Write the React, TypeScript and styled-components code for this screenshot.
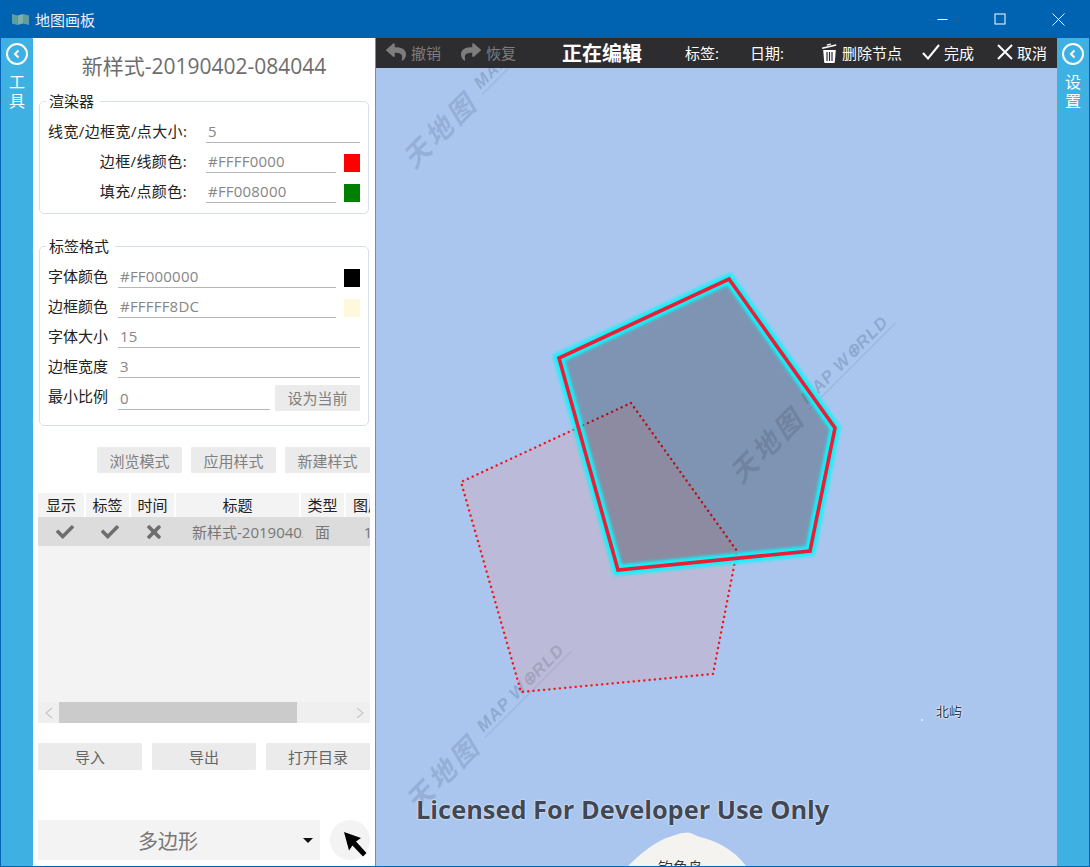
import React from 'react';
import styled, { createGlobalStyle } from 'styled-components';
import { FaCheck, FaReply, FaShare, FaTimes } from 'react-icons/fa';

const GlobalStyle = createGlobalStyle`
  html, body { margin: 0; padding: 0; background: #fff; }
  * { box-sizing: border-box; }
  body { font-family: "Open Sans", "Noto Sans CJK SC", sans-serif; font-size: 15px; color: #222; }
`;

const Window = styled.div`
  width: 1090px;
  height: 867px;
  display: flex;
  flex-direction: column;
  border: 1px solid #0063b1;
  border-top: 0;
  overflow: hidden;
`;

const TitleBar = styled.div`
  height: 38px;
  flex: none;
  display: flex;
  align-items: center;
  margin: 0 -1px;
  padding: 0 3px 0 12px;
  background: #0063b1;
  color: #e8f0f8;
  font-size: 15px;
`;

const TitleText = styled.span`
  margin-left: 6px;
  flex: 1;
`;

const WinButton = styled.div`
  width: 58px;
  height: 38px;
  display: flex;
  align-items: center;
  justify-content: center;
`;

const Body = styled.div`
  flex: 1;
  display: flex;
  min-height: 0;
`;

const Rail = styled.div`
  width: 32px;
  flex: none;
  display: flex;
  flex-direction: column;
  align-items: center;
  padding-top: 5px;
  background: #3fb0e2;
  color: #fff;
`;

const RailLabel = styled.div`
  height: 19px;
  font-size: 16px;
  line-height: 19px;
`;

const RailBack = styled.div`
  width: 22px;
  height: 22px;
  margin-bottom: 8px;
  border: 2px solid #fff;
  border-radius: 50%;
  display: flex;
  align-items: center;
  justify-content: center;
`;

const Panel = styled.div`
  width: 343px;
  flex: none;
  padding: 0 5px;
  background: #fff;
  border-right: 1px solid #3fa0dc;
  display: flex;
  flex-direction: column;
`;

const StyleTitle = styled.div`
  height: 53px;
  padding-top: 12px;
  text-align: center;
  font-size: 21px;
  line-height: 32px;
  color: #6d6d6d;
  white-space: nowrap;
`;

const Group = styled.fieldset<{ $top: number; $bottom: number }>`
  margin: ${p => p.$top}px 1px 0;
  padding: 4px 8px ${p => p.$bottom}px 8px;
  border: 1px solid #d6e0e8;
  border-radius: 5px;
  min-width: 0;
`;

const GroupLegend = styled.legend`
  margin-left: -2px;
  padding: 0 6px 0 3px;
  font-size: 15px;
  line-height: 20px;
  color: #222;
`;

const FieldRow = styled.div`
  height: 30px;
  display: flex;
  align-items: center;
`;

const FieldLabel = styled.label<{ $width: number; $right?: boolean }>`
  width: ${p => p.$width}px;
  flex: none;
  padding-right: ${p => (p.$right ? 19 : 0)}px;
  text-align: ${p => (p.$right ? 'right' : 'left')};
  letter-spacing: ${p => (p.$right ? 0.4 : 0)}px;
  font-size: 15px;
  white-space: nowrap;
`;

const FieldValue = styled.div<{ $low?: boolean }>`
  flex: 1;
  height: 22px;
  margin-top: ${p => (p.$low ? 8 : 4)}px;
  padding-left: 2px;
  border-bottom: 1px solid #b5b5b5;
  font-size: 15px;
  line-height: 21px;
  letter-spacing: 0.2px;
  color: #868686;
`;

const Swatch = styled.div<{ $color: string }>`
  width: 16px;
  height: 18px;
  flex: none;
  margin: 6px 0 0 8px;
  background: ${p => p.$color};
`;

const FlatButton = styled.div<{ $width?: number; $height?: number; $dark?: boolean }>`
  width: ${p => (p.$width ? `${p.$width}px` : 'auto')};
  height: ${p => p.$height ?? 26}px;
  flex: none;
  display: flex;
  align-items: center;
  justify-content: center;
  border-radius: 1px;
  background: #ebebeb;
  font-size: 15px;
  color: ${p => (p.$dark ? '#666' : '#808080')};
`;

const SetCurrent = styled(FlatButton)`
  margin-left: 5px;
  margin-top: 5px;
`;

const ModeRow = styled.div`
  display: flex;
  justify-content: flex-end;
  gap: 9px;
  margin-top: 21px;
`;

const TableBox = styled.div`
  height: 230px;
  margin-top: 20px;
  display: flex;
  flex-direction: column;
  background: #f3f3f3;
  overflow: hidden;
  flex: none;
`;

const TableRow = styled.div<{ $head?: boolean }>`
  display: grid;
  grid-template-columns: 46px 43px 43px 123px 43px 44px;
  column-gap: 2px;
  width: 354px;
  height: ${p => (p.$head ? 24 : 29)}px;
  flex: none;
  background: ${p => (p.$head ? '#fff' : '#dcdcdc')};
`;

const HeadCell = styled.div`
  background: #f3f3f3;
  text-align: center;
  font-size: 15px;
  line-height: 24px;
  white-space: nowrap;
  overflow: hidden;
`;

const Cell = styled.div<{ $shift?: number }>`
  display: flex;
  align-items: center;
  justify-content: center;
  padding-left: ${p => p.$shift ?? 0}px;
  color: #777;
  font-size: 15px;
  overflow: hidden;
`;

const TitleCell = styled(Cell)`
  justify-content: flex-start;
  padding-left: 16px;
  margin-right: -4px;
  white-space: nowrap;
`;

const TableFill = styled.div`
  flex: 1;
`;

const ScrollBar = styled.div`
  height: 21px;
  flex: none;
  display: flex;
  align-items: center;
  background: #efefef;
`;

const ScrollEnd = styled.div`
  width: 21px;
  height: 21px;
  flex: none;
  display: flex;
  align-items: center;
  justify-content: center;
`;

const ScrollTrack = styled.div`
  flex: 1;
  height: 21px;
`;

const ScrollThumb = styled.div`
  width: 238px;
  height: 21px;
  background: #cbcbcb;
`;

const FileRow = styled.div`
  display: flex;
  justify-content: space-between;
  margin-top: 20px;
`;

const ShapeRow = styled.div`
  display: flex;
  justify-content: space-between;
  margin-top: 50px;
`;

const ShapeSelect = styled.div`
  width: 282px;
  height: 40px;
  padding-right: 22px;
  display: flex;
  align-items: center;
  justify-content: center;
  position: relative;
  background: #f3f3f3;
  color: #777;
  font-size: 20px;
`;

const Caret = styled.div`
  position: absolute;
  right: 7px;
  top: 18px;
  border-left: 5px solid transparent;
  border-right: 5px solid transparent;
  border-top: 5px solid #111;
`;

const ToolCircle = styled.div`
  width: 40px;
  height: 40px;
  padding: 8px 0 0 10px;
  border-radius: 50%;
  background: #f3f3f3;
  display: flex;
  align-items: center;
  justify-content: center;
`;

const MapArea = styled.div`
  flex: 1;
  min-width: 0;
  display: flex;
  flex-direction: column;
`;

const Toolbar = styled.div`
  height: 30px;
  flex: none;
  display: flex;
  align-items: center;
  padding: 0 0 2px 10px;
  background: #2d2d30;
  color: #fff;
  font-size: 15px;
  white-space: nowrap;
  z-index: 2;
`;

const ToolItem = styled.div<{ $left?: number; $muted?: boolean; $gap?: number }>`
  display: flex;
  align-items: center;
  gap: ${p => p.$gap ?? 4}px;
  margin-left: ${p => p.$left ?? 0}px;
  color: ${p => (p.$muted ? '#7d7d7d' : '#fff')};
`;

const EditingLabel = styled.div`
  margin-left: 46px;
  font-size: 20px;
  font-weight: 700;
  color: #fff;
`;

const Canvas = styled.div`
  flex: 1;
  position: relative;
  overflow: hidden;
  background: #aac6ee;
`;

const ShapeLayer = styled.svg`
  position: absolute;
  left: 0;
  top: 0;
  width: 100%;
  height: 100%;
`;

const WatermarkCn = styled.div<{ $x: number; $y: number }>`
  position: absolute;
  left: ${p => p.$x}px;
  top: ${p => p.$y}px;
  transform: translate(-50%, -50%) rotate(-45deg);
  font-family: "Noto Sans CJK SC", sans-serif;
  font-size: 27px;
  font-weight: 700;
  font-style: italic;
  letter-spacing: 4px;
  color: rgba(60, 80, 110, 0.2);
  white-space: nowrap;
`;

const WatermarkEn = styled.div<{ $x: number; $y: number }>`
  position: absolute;
  left: ${p => p.$x}px;
  top: ${p => p.$y}px;
  transform: translate(-50%, -50%) rotate(-45deg);
  padding: 0 4px 0 2px;
  border-bottom: 1px solid rgba(60, 80, 110, 0.15);
  font-family: "Liberation Sans", sans-serif;
  font-size: 17px;
  line-height: 18px;
  font-weight: 700;
  font-style: italic;
  letter-spacing: 1px;
  color: rgba(60, 80, 110, 0.25);
  white-space: nowrap;
`;

const Licensed = styled.div`
  position: absolute;
  left: 40px;
  top: 724px;
  font-family: "Open Sans", sans-serif;
  font-size: 25.4px;
  line-height: 34px;
  font-weight: 700;
  color: #3f4856;
  white-space: nowrap;
  text-shadow: 0 0 2px #fff, 0 0 1px #e6eef8;
`;

const PlaceLabel = styled.div<{ $x: number; $y: number; $size: number }>`
  position: absolute;
  left: ${p => p.$x}px;
  top: ${p => p.$y}px;
  font-family: "Noto Sans CJK SC", sans-serif;
  font-size: ${p => p.$size}px;
  line-height: ${p => p.$size + 2}px;
  color: #333;
  white-space: nowrap;
  text-shadow: 0 0 2px #fff, 0 0 2px #fff;
`;

const Watermarks: { x: number; y: number }[] = [
  { x: 63, y: 61 },
  { x: 390, y: 376 },
  { x: 66, y: 704 },
];

const outlinePoints = '353,211 459,360 434,483 242,502 183,290';
const dottedPoints = '255,335 361,483 337,606 145,624 85,414';

const MapIcon = () => (
  <svg width="17" height="12" viewBox="0 0 17 12">
    <path d="M0 1l5.5 1.5V12L0 10.5z" fill="#5f9ea0" />
    <path d="M5.5 2.5L11 1v9.5L5.5 12z" fill="#7fb0a8" />
    <path d="M11 1l6 1.5V12l-6-1.5z" fill="#5f9ea0" />
  </svg>
);

const WindowControls = () => (
  <>
    <WinButton>
      <svg width="11" height="11" viewBox="0 0 11 11">
        <path d="M0.5 5.5h10" stroke="#fff" strokeWidth="1" />
      </svg>
    </WinButton>
    <WinButton>
      <svg width="12" height="12" viewBox="0 0 12 12">
        <rect x="1" y="1" width="10" height="10" fill="none" stroke="#fff" strokeWidth="1" />
      </svg>
    </WinButton>
    <WinButton>
      <svg width="13" height="13" viewBox="0 0 13 13">
        <path d="M0.5 0.5l12 12M12.5 0.5l-12 12" stroke="#fff" strokeWidth="1" />
      </svg>
    </WinButton>
  </>
);

const BackChevron = () => (
  <svg width="10" height="10" viewBox="0 0 10 10">
    <path d="M6.5 1.5L3 5l3.5 3.5" fill="none" stroke="#fff" strokeWidth="2" />
  </svg>
);

const TrashIcon = () => (
  <svg width="17" height="21" viewBox="0 0 17 21">
    <path d="M1 5.6l14-3.4.4 1.5-14 3.4z" fill="#fff" />
    <path d="M6 3.8l4-1-.4-1.4-4 1z" fill="#fff" />
    <path
      d="M2.2 8h12.6l-1 12.2c0 .4-.3.8-.8.8H4c-.5 0-.8-.4-.8-.8zM5.4 10v9h1.2v-9zM7.9 10v9h1.2v-9zM10.4 10v9h1.2v-9z"
      fill="#fff"
      fillRule="evenodd"
    />
  </svg>
);

const ThinCheck = () => (
  <svg width="18" height="16" viewBox="0 0 18 16">
    <path d="M1 9l5 5.5L17 1" fill="none" stroke="#fff" strokeWidth="2" />
  </svg>
);

const ThinCross = () => (
  <svg width="16" height="16" viewBox="0 0 16 16">
    <path d="M1 1l14 14M15 1L1 15" fill="none" stroke="#fff" strokeWidth="2" />
  </svg>
);

const PointerIcon = () => (
  <svg width="26" height="28" viewBox="0 0 26 28">
    <path d="M2 2l17 6-5 3.6L24.5 23 21 26.6 10.500 15.500 7 20.500z" fill="#000" />
  </svg>
);

const Chevron = ({ flip }: { flip?: boolean }) => (
  <svg width="8" height="12" viewBox="0 0 8 12">
    <path d={flip ? 'M1 1l6 5-6 5' : 'M7 1L1 6l6 5'} fill="none" stroke="#c8c8c8" strokeWidth="1.2" />
  </svg>
);

const App: React.FC = () => {
  return (
    <Window>
      <GlobalStyle />
      <TitleBar>
        <MapIcon />
        <TitleText>地图画板</TitleText>
        <WindowControls />
      </TitleBar>
      <Body>
        <Rail>
          <RailBack><BackChevron /></RailBack>
          <RailLabel>工</RailLabel>
          <RailLabel>具</RailLabel>
        </Rail>

        <Panel>
          <StyleTitle>新样式-20190402-084044</StyleTitle>

          <Group $top={0} $bottom={8}>
            <GroupLegend>渲染器</GroupLegend>
            <FieldRow>
              <FieldLabel $width={158} $right>线宽/边框宽/点大小:</FieldLabel>
              <FieldValue>5</FieldValue>
            </FieldRow>
            <FieldRow>
              <FieldLabel $width={158} $right>边框/线颜色:</FieldLabel>
              <FieldValue>#FFFF0000</FieldValue>
              <Swatch $color="#ff0000" />
            </FieldRow>
            <FieldRow>
              <FieldLabel $width={158} $right>填充/点颜色:</FieldLabel>
              <FieldValue>#FF008000</FieldValue>
              <Swatch $color="#008000" />
            </FieldRow>
          </Group>

          <Group $top={22} $bottom={15}>
            <GroupLegend>标签格式</GroupLegend>
            <FieldRow>
              <FieldLabel $width={70}>字体颜色</FieldLabel>
              <FieldValue>#FF000000</FieldValue>
              <Swatch $color="#000000" />
            </FieldRow>
            <FieldRow>
              <FieldLabel $width={70}>边框颜色</FieldLabel>
              <FieldValue>#FFFFF8DC</FieldValue>
              <Swatch $color="#fff8dc" />
            </FieldRow>
            <FieldRow>
              <FieldLabel $width={70}>字体大小</FieldLabel>
              <FieldValue>15</FieldValue>
            </FieldRow>
            <FieldRow>
              <FieldLabel $width={70}>边框宽度</FieldLabel>
              <FieldValue>3</FieldValue>
            </FieldRow>
            <FieldRow>
              <FieldLabel $width={70}>最小比例</FieldLabel>
              <FieldValue $low>0</FieldValue>
              <SetCurrent $width={85}>设为当前</SetCurrent>
            </FieldRow>
          </Group>

          <ModeRow>
            <FlatButton $width={85}>浏览模式</FlatButton>
            <FlatButton $width={85}>应用样式</FlatButton>
            <FlatButton $width={85}>新建样式</FlatButton>
          </ModeRow>

          <TableBox>
            <TableRow $head>
              <HeadCell>显示</HeadCell>
              <HeadCell>标签</HeadCell>
              <HeadCell>时间</HeadCell>
              <HeadCell>标题</HeadCell>
              <HeadCell>类型</HeadCell>
              <HeadCell>图层</HeadCell>
            </TableRow>
            <TableRow>
              <Cell $shift={8}><FaCheck size={18} color="#6e6e6e" /></Cell>
              <Cell $shift={4}><FaCheck size={18} color="#6e6e6e" /></Cell>
              <Cell $shift={2}><FaTimes size={20} color="#6e6e6e" /></Cell>
              <TitleCell>新样式-20190402-084044</TitleCell>
              <Cell>面</Cell>
              <Cell>1</Cell>
            </TableRow>
            <TableFill />
            <ScrollBar>
              <ScrollEnd><Chevron /></ScrollEnd>
              <ScrollTrack><ScrollThumb /></ScrollTrack>
              <ScrollEnd><Chevron flip /></ScrollEnd>
            </ScrollBar>
          </TableBox>

          <FileRow>
            <FlatButton $width={104} $height={27} $dark>导入</FlatButton>
            <FlatButton $width={104} $height={27} $dark>导出</FlatButton>
            <FlatButton $width={104} $height={27} $dark>打开目录</FlatButton>
          </FileRow>

          <ShapeRow>
            <ShapeSelect>
              多边形
              <Caret />
            </ShapeSelect>
            <ToolCircle><PointerIcon /></ToolCircle>
          </ShapeRow>
        </Panel>

        <MapArea>
          <Toolbar>
            <ToolItem $muted $gap={5}><FaReply size={20} />撤销</ToolItem>
            <ToolItem $left={20} $muted $gap={5}><FaShare size={20} />恢复</ToolItem>
            <EditingLabel>正在编辑</EditingLabel>
            <ToolItem $left={43}>标签:</ToolItem>
            <ToolItem $left={31}>日期:</ToolItem>
            <ToolItem $left={37}><TrashIcon />删除节点</ToolItem>
            <ToolItem $left={20}><ThinCheck />完成</ToolItem>
            <ToolItem $left={23}><ThinCross />取消</ToolItem>
          </Toolbar>
          <Canvas>
            {Watermarks.map(w => (
              <React.Fragment key={w.x + w.y}>
                <WatermarkCn $x={w.x} $y={w.y}>天地图</WatermarkCn>
                <WatermarkEn $x={w.x + 80} $y={w.y - 84}>MAP W⊕RLD</WatermarkEn>
              </React.Fragment>
            ))}
            <ShapeLayer viewBox="0 0 681 798">
              <defs>
                <filter id="glow" x="-10%" y="-10%" width="120%" height="120%">
                  <feGaussianBlur stdDeviation="1.5" />
                </filter>
                <filter id="soft" x="-10%" y="-10%" width="120%" height="120%">
                  <feGaussianBlur stdDeviation="0.4" />
                </filter>
              </defs>
              {/* island at the bottom edge */}
              <path d="M252 798c10-10 24-22 38-28 10-3 14-5 18-5 6-2 10 2 16 4 14 3 34 12 46 29z" fill="#f4f3ef" />
              <circle cx="546" cy="652" r="1" fill="#eef2f8" />
              <polygon
                points={dottedPoints}
                fill="rgba(255,140,130,0.2)"
                stroke="#f5141e"
                strokeWidth="2.4"
                strokeLinecap="round"
                strokeDasharray="0.1 5.2"
              />
              <polygon points={outlinePoints} fill="rgba(0,0,0,0.25)" />
              <polygon points={outlinePoints} fill="none" stroke="#10f4fc" strokeWidth="10.500" filter="url(#glow)" />
              <polygon points={outlinePoints} fill="none" stroke="#ee1c36" strokeWidth="3.600" filter="url(#soft)" />
            </ShapeLayer>
            <PlaceLabel $x={560} $y={635} $size={13}>北屿</PlaceLabel>
            <PlaceLabel $x={282} $y={790} $size={15}>钓鱼岛</PlaceLabel>
            <Licensed>Licensed For Developer Use Only</Licensed>
          </Canvas>
        </MapArea>

        <Rail>
          <RailBack><BackChevron /></RailBack>
          <RailLabel>设</RailLabel>
          <RailLabel>置</RailLabel>
        </Rail>
      </Body>
    </Window>
  );
};

export default App;
